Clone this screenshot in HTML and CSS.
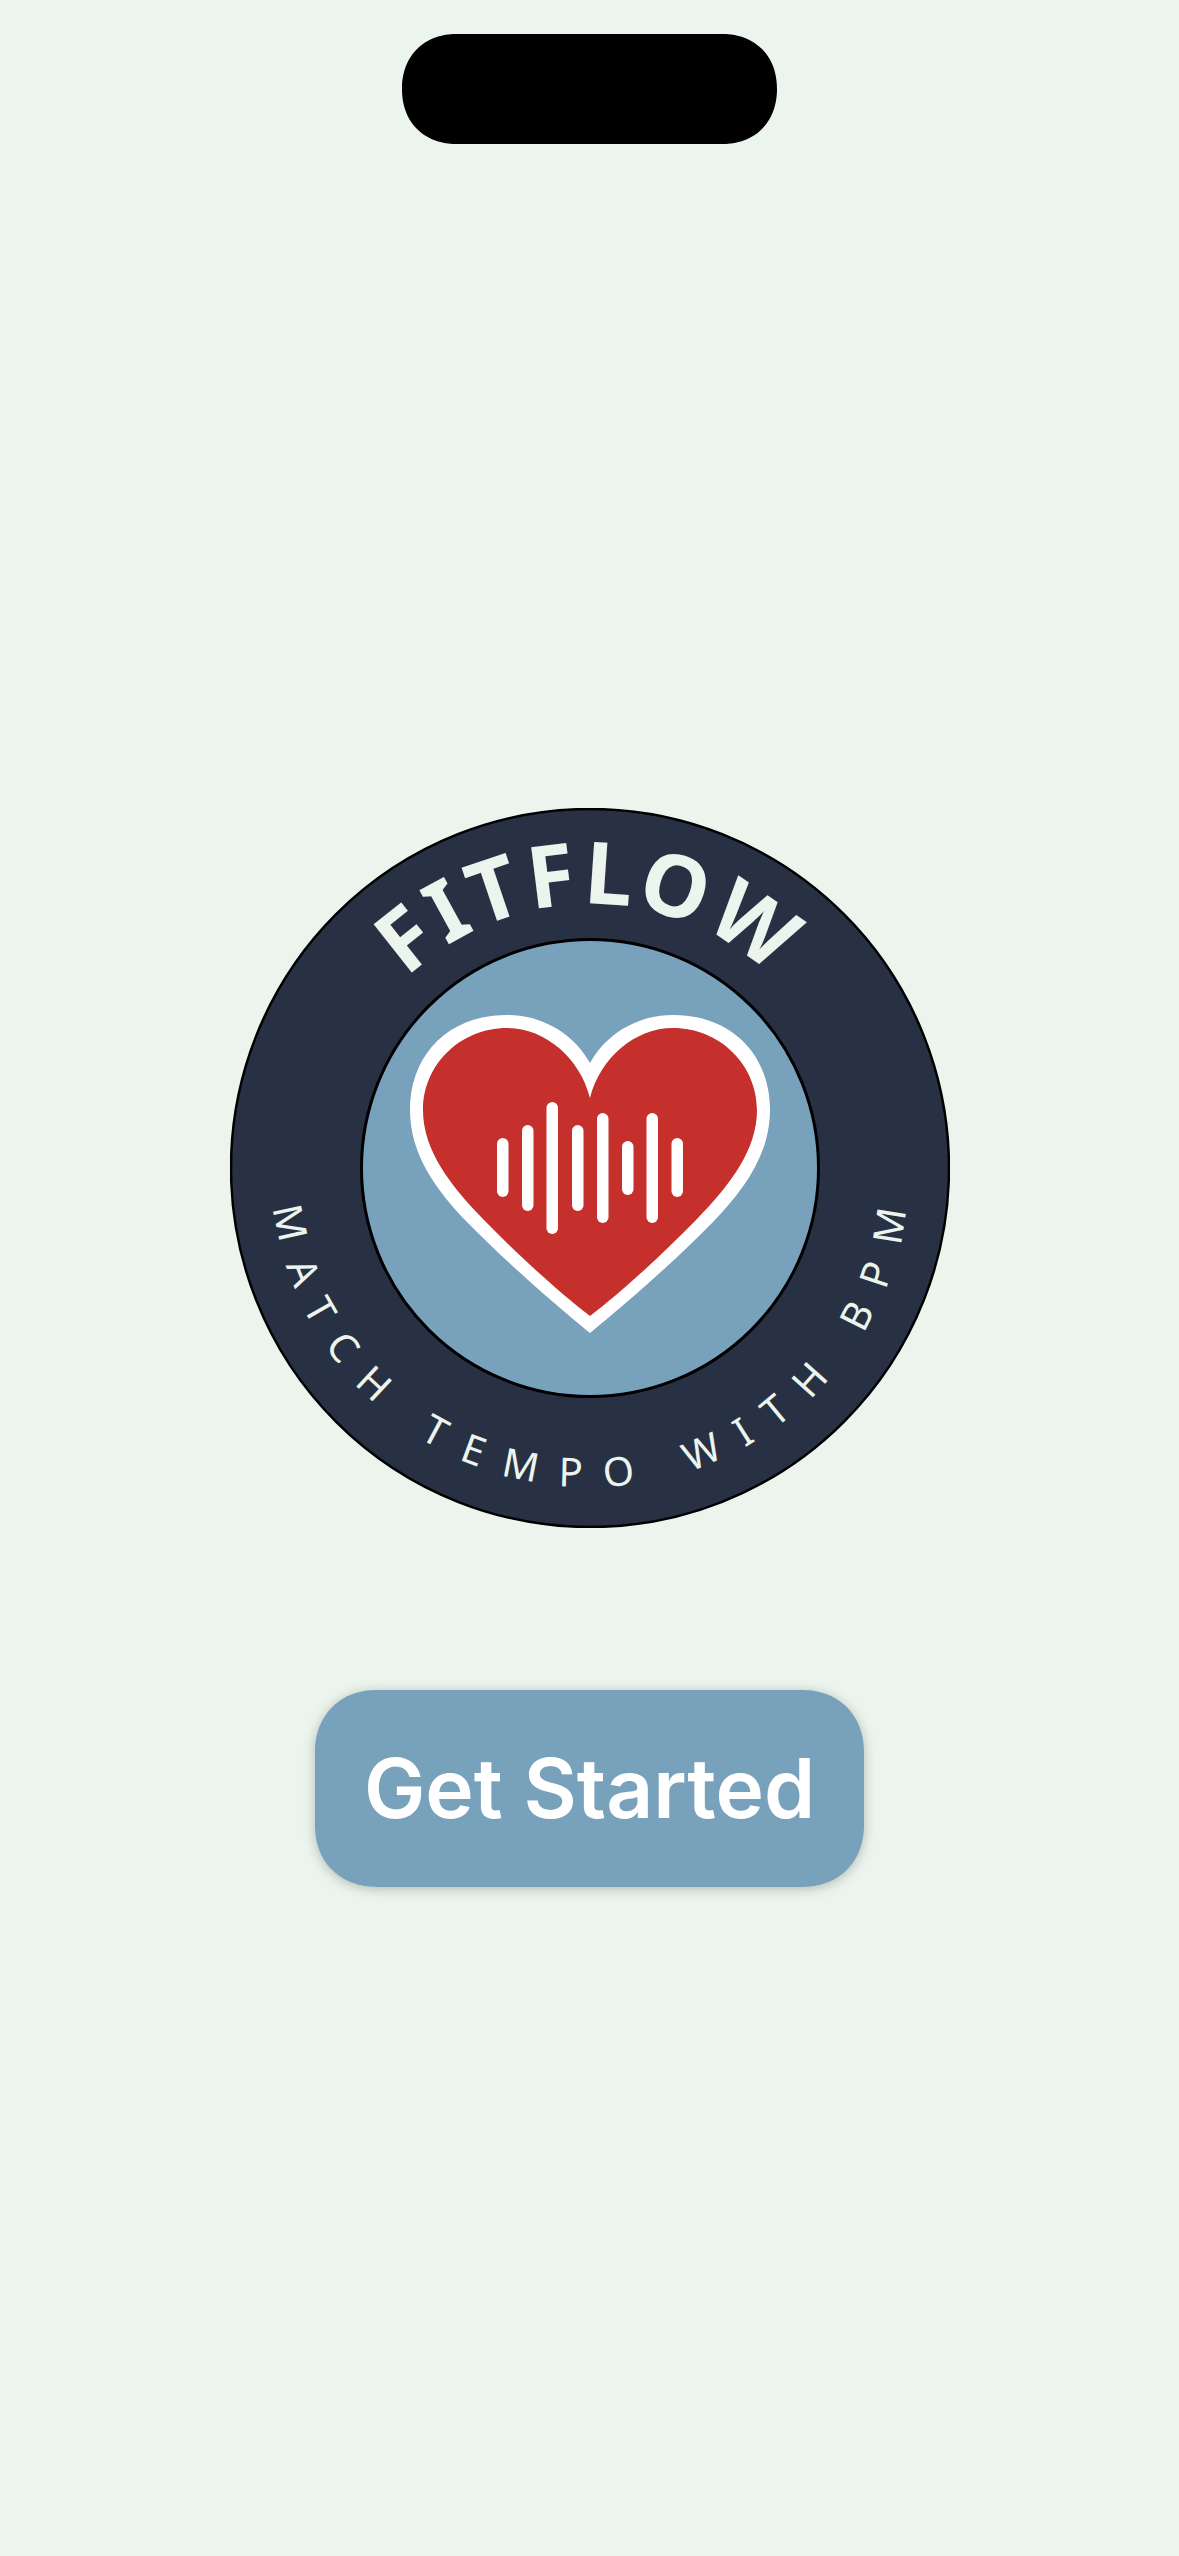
FILE: index.html
```html
<!DOCTYPE html>
<html lang="en">
<head>
<meta charset="utf-8">
<title>FitFlow</title>
<link rel="stylesheet" href="styles.css">
</head>
<body>
<main class="screen">
  <div class="island"></div>
  <svg class="logo" viewBox="230 808 720 720" width="720" height="720" role="img" aria-label="FitFlow logo">
    <defs>
      <path id="arc-top" d="M326 1168 A264 264 0 0 1 854 1168"/>
      <path id="arc-bottom" d="M271 1168 A319 319 0 0 0 909 1168"/>
    </defs>
    <circle class="ring" cx="590" cy="1168" r="359"/>
    <circle class="disc" cx="590" cy="1168" r="228.5"/>
    <text class="title"><textPath href="#arc-top" startOffset="50%">FITFLOW</textPath></text>
    <text class="tagline"><textPath href="#arc-bottom" startOffset="51%">MATCH TEMPO WITH BPM</textPath></text>
    <path class="heart-edge" d="M590 1333 C562 1310 510 1266 467 1222 C437 1191 410 1155 410 1110 C410 1055 448 1015 507 1015 C545 1015 575 1036 590 1063 C605 1036 635 1015 673 1015 C732 1015 770 1055 770 1110 C770 1155 743 1191 713 1222 C670 1266 618 1310 590 1333 Z"/>
    <path class="heart-fill" d="M590 1098 C580 1058 545 1028 507 1028 C460 1028 423 1065 423 1110 C423 1150 450 1185 483 1219 C520 1257 560 1293 590 1316 C620 1293 660 1257 697 1219 C730 1185 757 1150 757 1110 C757 1065 720 1028 673 1028 C635 1028 600 1058 590 1098 Z"/>
    <g class="bars">
      <rect x="497" y="1138" width="11.5" height="59" rx="5.75"/>
      <rect x="522" y="1125" width="11.5" height="86" rx="5.75"/>
      <rect x="546.5" y="1102" width="11.5" height="132" rx="5.75"/>
      <rect x="572" y="1125" width="11.5" height="86" rx="5.75"/>
      <rect x="597" y="1113" width="11.5" height="110" rx="5.75"/>
      <rect x="622" y="1141" width="11.5" height="54" rx="5.75"/>
      <rect x="646.5" y="1113" width="11.5" height="110" rx="5.75"/>
      <rect x="671.5" y="1138" width="11.5" height="59" rx="5.75"/>
    </g>
  </svg>
  <button class="cta" type="button">Get Started</button>
</main>
</body>
</html>
```
FILE: styles.css
```css
* { box-sizing: border-box; }

html, body {
  margin: 0;
  background: #ebf5ee;
}

.screen {
  display: flex;
  flex-direction: column;
  align-items: center;
  min-height: 2556px;
  padding-top: 34px;
}

.island {
  width: 375px;
  height: 110px;
  border-radius: 55px;
  corner-shape: superellipse(1.12);
  background: #000;
}

.logo {
  display: block;
  margin-top: 664px;
}

.ring {
  fill: #283044;
  stroke: #000;
  stroke-width: 2.5;
}

.disc {
  fill: #78a1bb;
  stroke: #000;
  stroke-width: 3;
}

.title {
  fill: #ebf5ee;
  font-family: "Noto Sans", sans-serif;
  font-weight: 700;
  font-size: 86px;
  letter-spacing: 4.5px;
  text-anchor: middle;
}

.tagline {
  fill: #ebf5ee;
  font-family: "Noto Sans", sans-serif;
  font-weight: 400;
  font-size: 40px;
  letter-spacing: 22.5px;
  text-anchor: middle;
}

.heart-edge { fill: #fff; }
.heart-fill { fill: #c5302c; }
.bars rect { fill: #fff; }

.cta {
  display: flex;
  align-items: center;
  justify-content: center;
  width: 549px;
  height: 197px;
  margin-top: 162px;
  padding: 0;
  border: 0;
  border-radius: 62px;
  corner-shape: superellipse(1.1);
  background: #78a1bb;
  box-shadow: 0 2px 12px rgba(0, 0, 0, 0.25);
  color: #fff;
  font-family: "Inter", sans-serif;
  font-weight: 640;
  font-size: 82px;
  line-height: 1;
}
```
